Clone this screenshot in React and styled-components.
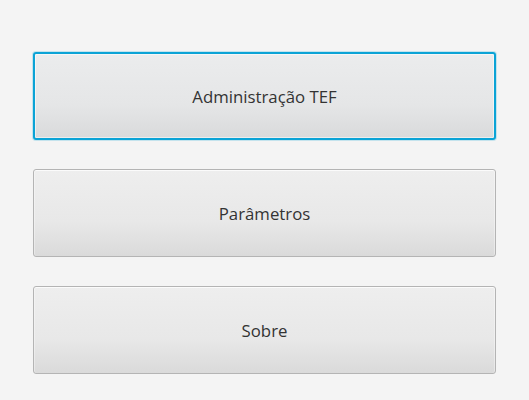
import React from "react";
import styled, { createGlobalStyle, css } from "styled-components";

const Global = createGlobalStyle`
  html, body { margin: 0; padding: 0; background: #f4f4f4; }
  body { width: 529px; height: 400px; overflow: hidden; }
`;

const Page = styled.div`
  box-sizing: border-box;
  width: 529px;
  height: 400px;
  padding: 52px 33px 0 33px;
  display: flex;
  flex-direction: column;
  gap: 29px;
  background: #f4f4f4;
`;

const Button = styled.button`
  box-sizing: border-box;
  height: 88px;
  width: 100%;
  margin: 0;
  border-radius: 3px;
  border: 1px solid #b4b4b4;
  background: linear-gradient(to bottom, #eeeeee 0%, #e8e8e8 60%, #dadada 100%);
  box-shadow: inset 0 1px 0 rgba(255, 255, 255, 0.75), inset 1px 0 0 rgba(255,255,255,0.35), inset -1px 0 0 rgba(255,255,255,0.35);
  font-family: "Open Sans", "Noto Sans", sans-serif;
  font-size: 16.8px;
  color: #333333;
  cursor: default;
  outline: none;
  padding: 0;
  ${(p) =>
    p.$focused &&
    css`
      border: 2px solid #0ba3d6;
      box-shadow: 0 0 0 1px rgba(3, 158, 211, 0.2),
        inset 0 0 0 1px rgba(255, 255, 255, 0.5);
      background: linear-gradient(to bottom, #ebeced 0%, #e5e6e7 60%, #d9dadb 100%);
    `}
`;

export default function App() {
  return (
    <>
      <Global />
      <Page>
        <Button $focused>Administração TEF</Button>
        <Button>Parâmetros</Button>
        <Button>Sobre</Button>
      </Page>
    </>
  );
}
